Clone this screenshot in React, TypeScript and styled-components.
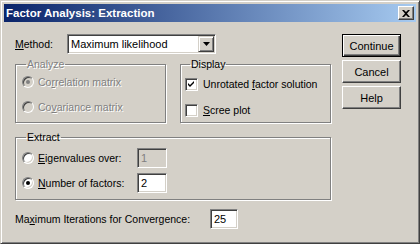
import React from "react";
import styled, { createGlobalStyle } from "styled-components";

const GlobalStyle = createGlobalStyle`
  html, body {
    margin: 0;
    padding: 0;
    background: #d4d0c8;
  }
  body {
    font-family: "Liberation Sans", Arial, sans-serif;
    font-size: 10.5px;
    color: #000;
  }
`;

const face = "#d4d0c8";
const shadow = "#808080";
const darkShadow = "#404040";

const Window = styled.div`
  box-sizing: border-box;
  width: 420px;
  height: 244px;
  display: flex;
  flex-direction: column;
  background: ${face};
  border-top: 1px solid ${face};
  border-left: 1px solid ${face};
  border-right: 1px solid ${darkShadow};
  border-bottom: 1px solid ${darkShadow};
  box-shadow: inset 1px 1px 0 #fff, inset -1px -1px 0 ${shadow};
  padding: 3px;
`;

const TitleBar = styled.div`
  height: 18px;
  display: flex;
  align-items: center;
  justify-content: space-between;
  padding: 0 2px;
  background: linear-gradient(to right, #0a246a, #a6caf0);
  color: #fff;
  font-weight: bold;
  font-size: 11.5px;
`;

const CloseButton = styled.div`
  box-sizing: border-box;
  width: 16px;
  height: 14px;
  display: flex;
  align-items: center;
  justify-content: center;
  background: ${face};
  border-top: 1px solid #fff;
  border-left: 1px solid #fff;
  border-right: 1px solid ${darkShadow};
  border-bottom: 1px solid ${darkShadow};
  box-shadow: inset -1px -1px 0 ${shadow};
`;

const Body = styled.div`
  flex: 1;
  display: flex;
  gap: 11px;
  padding: 12px 0 0 11px;
`;

const LeftColumn = styled.div`
  width: 316px;
  display: flex;
  flex-direction: column;
`;

const ButtonColumn = styled.div`
  display: flex;
  flex-direction: column;
  gap: 3px;
`;

const Row = styled.div<{ $top?: number; $height: number }>`
  display: flex;
  align-items: center;
  height: ${(p) => p.$height}px;
  margin-top: ${(p) => p.$top ?? 0}px;
`;

const Label = styled.span<{ $width?: number; $disabled?: boolean }>`
  white-space: nowrap;
  width: ${(p) => (p.$width ? `${p.$width}px` : "auto")};
  flex: none;
  color: ${(p) => (p.$disabled ? shadow : "#000")};
  text-shadow: ${(p) => (p.$disabled ? "1px 1px 0 #fff" : "none")};
  u {
    text-decoration: underline;
    text-underline-offset: 1px;
  }
`;

const Sunken = styled.div<{ $width: number; $height: number; $disabled?: boolean }>`
  box-sizing: border-box;
  width: ${(p) => p.$width}px;
  height: ${(p) => p.$height}px;
  display: flex;
  align-items: center;
  background: ${(p) => (p.$disabled ? face : "#fff")};
  color: ${(p) => (p.$disabled ? shadow : "#000")};
  border-top: 1px solid ${shadow};
  border-left: 1px solid ${shadow};
  border-right: 1px solid #fff;
  border-bottom: 1px solid #fff;
  box-shadow: inset 1px 1px 0 ${darkShadow}, inset -1px -1px 0 ${face};
  padding: 0 2px 0 3px;
  font-size: 11px;
`;

const SelectText = styled.span`
  flex: 1;
`;

const DropButton = styled.div`
  box-sizing: border-box;
  width: 16px;
  height: 16px;
  margin-right: -1px;
  display: flex;
  align-items: center;
  justify-content: center;
  background: ${face};
  border-top: 1px solid ${face};
  border-left: 1px solid ${face};
  border-right: 1px solid ${darkShadow};
  border-bottom: 1px solid ${darkShadow};
  box-shadow: inset 1px 1px 0 #fff, inset -1px -1px 0 ${shadow};
`;

const GroupsRow = styled.div`
  display: flex;
  gap: 14px;
  height: 65px;
  margin-top: 4px;
`;

const Group = styled.fieldset<{
  $width?: number;
  $padLeft: number;
  $padTop: number;
  $gap: number;
}>`
  box-sizing: border-box;
  margin: 0;
  min-width: 0;
  width: ${(p) => (p.$width ? `${p.$width}px` : "auto")};
  flex: ${(p) => (p.$width ? "none" : "1")};
  border: 1px solid ${shadow};
  box-shadow: 1px 1px 0 #fff, inset 1px 1px 0 #fff;
  padding: ${(p) => p.$padTop}px 0 0 ${(p) => p.$padLeft}px;
  display: flex;
  flex-direction: column;
  gap: ${(p) => p.$gap}px;
`;

const ExtractGroup = styled(Group)`
  flex: none;
  height: 69px;
  margin-top: 8px;
`;

const Legend = styled.legend<{ $disabled?: boolean }>`
  padding: 0 1px;
  margin-left: 5px;
  line-height: 13px;
  color: ${(p) => (p.$disabled ? shadow : "#000")};
  text-shadow: ${(p) => (p.$disabled ? "1px 1px 0 #fff" : "none")};
`;

const Option = styled.div<{ $height: number; $gap: number }>`
  display: flex;
  align-items: center;
  height: ${(p) => p.$height}px;
  gap: ${(p) => p.$gap}px;
`;

const Radio = styled.span<{ $checked?: boolean; $disabled?: boolean }>`
  box-sizing: border-box;
  width: 12px;
  height: 12px;
  flex: none;
  border-radius: 50%;
  border: 1px solid;
  border-color: ${shadow} #fff #fff ${shadow};
  background: ${(p) => (p.$disabled ? face : "#fff")};
  box-shadow: inset 1px 1px 0 ${darkShadow}, inset -1px -1px 0 ${face};
  display: flex;
  align-items: center;
  justify-content: center;
  margin-left: 1px;
  &::after {
    content: "";
    width: 4px;
    height: 4px;
    border-radius: 50%;
    background: ${(p) =>
      p.$checked ? (p.$disabled ? shadow : "#000") : "transparent"};
  }
`;

const CheckBox = styled.span`
  box-sizing: border-box;
  width: 13px;
  height: 13px;
  flex: none;
  display: flex;
  align-items: center;
  justify-content: center;
  background: #fff;
  border-top: 1px solid ${shadow};
  border-left: 1px solid ${shadow};
  border-right: 1px solid #fff;
  border-bottom: 1px solid #fff;
  box-shadow: inset 1px 1px 0 ${darkShadow}, inset -1px -1px 0 ${face};
`;

const Button = styled.div<{ $default?: boolean }>`
  box-sizing: border-box;
  width: 59px;
  height: 23px;
  display: flex;
  align-items: center;
  justify-content: center;
  font-size: 11px;
  background: ${face};
  border: 1px solid;
  border-color: ${(p) =>
    p.$default ? "#000" : `#fff ${darkShadow} ${darkShadow} #fff`};
  box-shadow: ${(p) =>
    p.$default
      ? `inset 1px 1px 0 #fff, inset -1px -1px 0 ${darkShadow}, inset -2px -2px 0 ${shadow}`
      : `inset -1px -1px 0 ${shadow}`};
`;

function CheckMark() {
  return (
    <svg width="7" height="7" viewBox="0 0 7 7">
      <path d="M0 2 L2 4 L6 0 L6 2 L2 6 L0 4 Z" fill="#000" />
    </svg>
  );
}

export default function App() {
  return (
    <>
      <GlobalStyle />
      <Window>
        <TitleBar>
          <span>Factor Analysis: Extraction</span>
          <CloseButton>
            <svg width="8" height="7" viewBox="0 0 8 7">
              <path
                d="M0 0h2l2 2 2-2h2L5 3.5 8 7H6L4 5 2 7H0l3-3.5z"
                fill="#000"
              />
            </svg>
          </CloseButton>
        </TitleBar>
        <Body>
          <LeftColumn>
            <Row $height={20}>
              <Label $width={52}>
                <u>M</u>ethod:
              </Label>
              <Sunken $width={149} $height={20}>
                <SelectText>Maximum likelihood</SelectText>
                <DropButton>
                  <svg width="7" height="4" viewBox="0 0 7 4">
                    <path d="M0 0h7L3.5 4z" fill="#000" />
                  </svg>
                </DropButton>
              </Sunken>
            </Row>

            <GroupsRow>
              <Group $width={151} $padLeft={5} $padTop={0} $gap={3}>
                <Legend $disabled>Analyze</Legend>
                <Option $height={22} $gap={4}>
                  <Radio $checked $disabled />
                  <Label $disabled>
                    Co<u>r</u>relation matrix
                  </Label>
                </Option>
                <Option $height={22} $gap={4}>
                  <Radio $disabled />
                  <Label $disabled>
                    Co<u>v</u>ariance matrix
                  </Label>
                </Option>
              </Group>
              <Group $padLeft={4} $padTop={2} $gap={4}>
                <Legend>Display</Legend>
                <Option $height={22} $gap={5}>
                  <CheckBox>
                    <CheckMark />
                  </CheckBox>
                  <Label>
                    Unrotated <u>f</u>actor solution
                  </Label>
                </Option>
                <Option $height={22} $gap={5}>
                  <CheckBox />
                  <Label>
                    <u>S</u>cree plot
                  </Label>
                </Option>
              </Group>
            </GroupsRow>

            <ExtractGroup $padLeft={5} $padTop={3} $gap={4}>
              <Legend>Extract</Legend>
              <Option $height={21} $gap={4}>
                <Radio />
                <Label $width={95}>
                  <u>E</u>igenvalues over:
                </Label>
                <Sunken $width={30} $height={20} $disabled>
                  1
                </Sunken>
              </Option>
              <Option $height={21} $gap={4}>
                <Radio $checked />
                <Label $width={95}>
                  <u>N</u>umber of factors:
                </Label>
                <Sunken $width={30} $height={20}>
                  2
                </Sunken>
              </Option>
            </ExtractGroup>

            <Row $height={20} $top={9}>
              <Label $width={195}>
                Ma<u>x</u>imum Iterations for Convergence:
              </Label>
              <Sunken $width={28} $height={20}>
                25
              </Sunken>
            </Row>
          </LeftColumn>

          <ButtonColumn>
            <Button $default>Continue</Button>
            <Button>Cancel</Button>
            <Button>Help</Button>
          </ButtonColumn>
        </Body>
      </Window>
    </>
  );
}
